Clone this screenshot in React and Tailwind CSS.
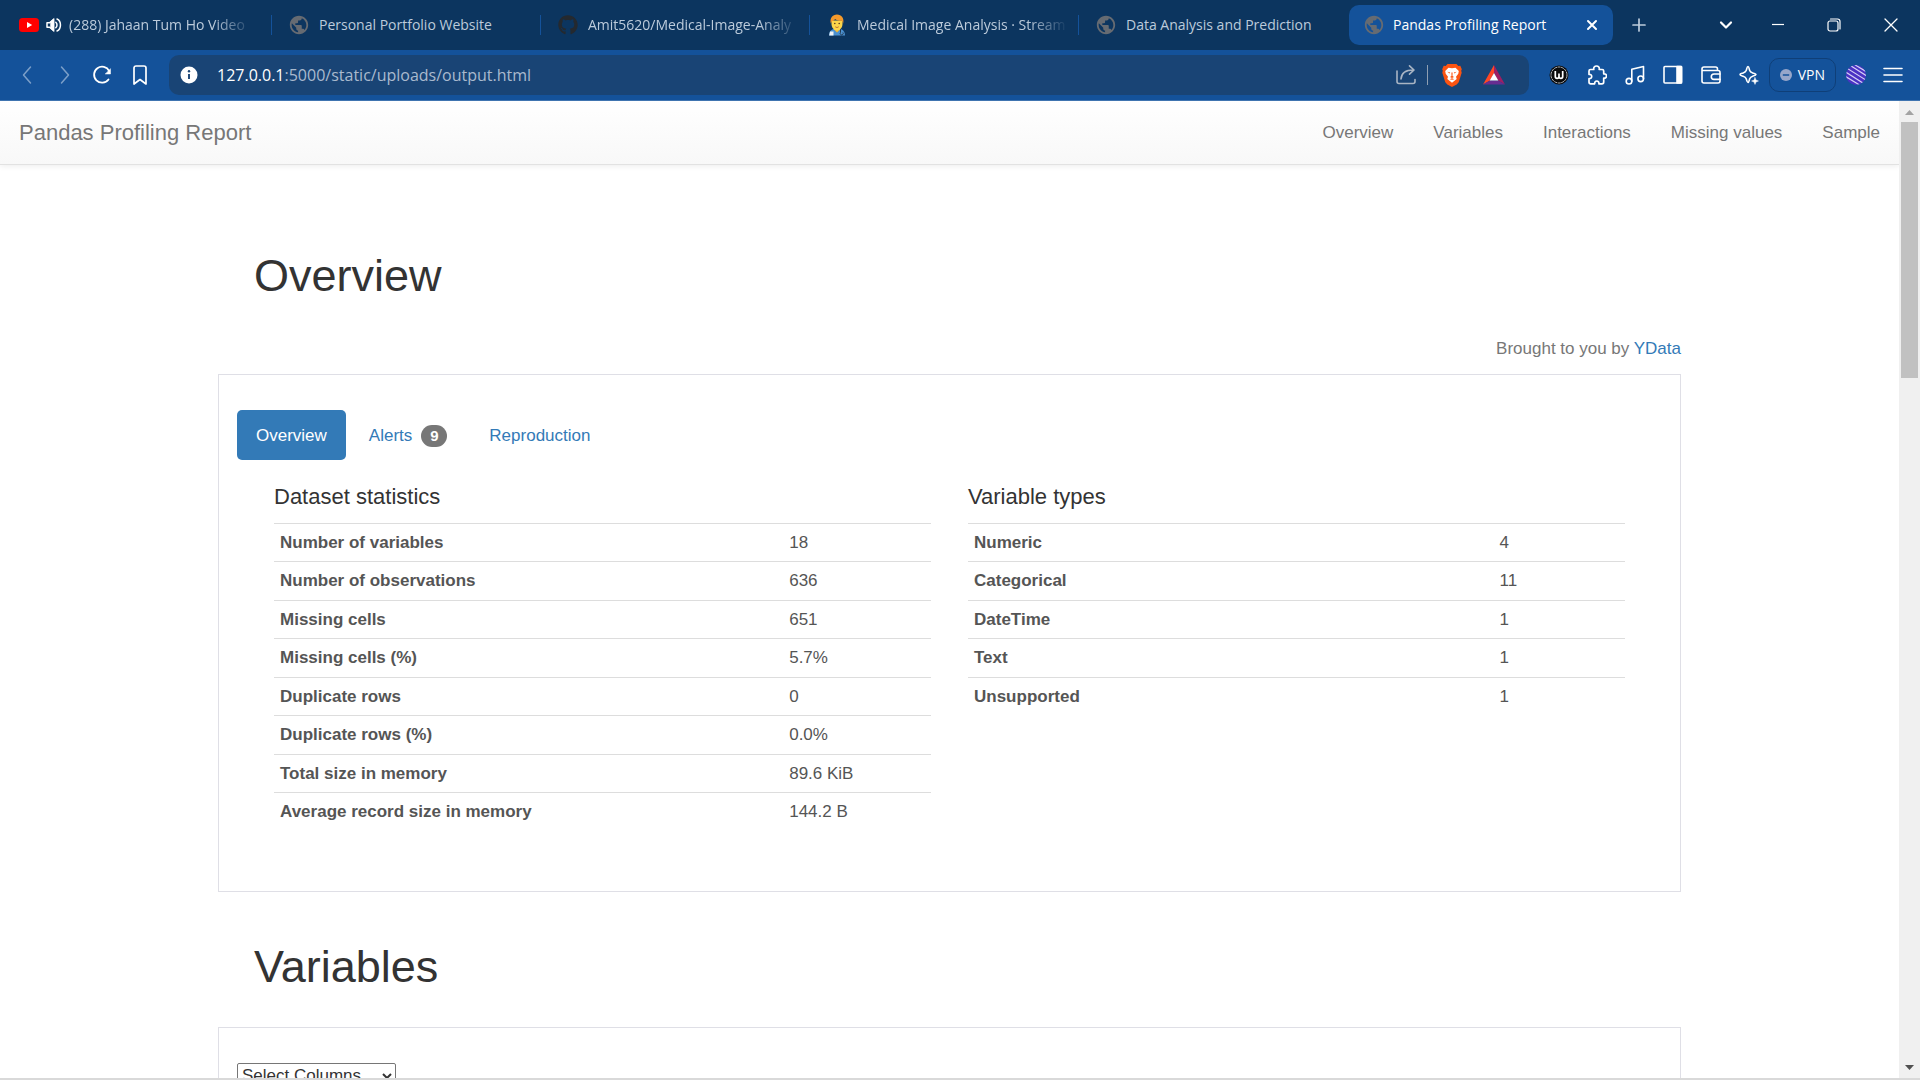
import React from "react";
import { MdPublic } from "react-icons/md";
import { FaGithub } from "react-icons/fa";

const UI_FONT = "font-['Open_Sans','Noto_Sans',sans-serif]";

function YoutubeIcon() {
  return (
    <svg width="20" height="20" viewBox="0 0 20 20" aria-hidden="true">
      <rect x="0" y="3" width="20" height="14" rx="3.5" fill="#f00" />
      <path d="M8 7l5.2 3L8 13z" fill="#fff" />
    </svg>
  );
}

function SpeakerIcon() {
  return (
    <svg width="16" height="16" viewBox="0 0 16 16" fill="none" stroke="#fff" strokeWidth="1.5" className="shrink-0" aria-hidden="true">
      <path d="M1 5.8h2.6L7.5 2.5v11L3.6 10.2H1z" strokeLinejoin="round" />
      <path d="M7.5 2.5v11L5 11V5z" fill="#fff" />
      <path d="M9.8 5.2c1.6 1.500 1.600 4.100 0 5.600M11 2c4.600 2 4.600 10 0 12" strokeLinecap="round" />
    </svg>
  );
}

function DoctorIcon() {
  return (
    <svg width="20" height="22" viewBox="0 0 20 22" aria-hidden="true">
      <path d="M2 21.500c0-4 2.500-6.200 5.200-6.700h5.600c2.700.5 5.200 2.700 5.200 6.700z" fill="#4a90d0" />
      <path d="M7 13h6v2.600l-3 3-3-3z" fill="#f2b632" />
      <path d="M4.500 6.500h11V10c0 3.800-2.600 6.400-5.500 6.400S4.500 13.800 4.500 10z" fill="#fcd54a" />
      <path d="M3.800 9.500C2.600 4 5.500.5 10 .5s7.400 3.500 6.200 9l-1.200-2.700c-3 .3-5.500-.6-7-1.800-.4 1.200-1.600 2-3 2.300z" fill="#f59a2c" />
      <circle cx="7.800" cy="9.500" r=".8" fill="#5b3b1e" />
      <circle cx="12.200" cy="9.500" r=".8" fill="#5b3b1e" />
      <path d="M8.300 12.800c1 .9 2.400.9 3.400 0" stroke="#b5622a" strokeWidth=".9" fill="none" />
      <path d="M3 17.500h3.500v4H2.200z" fill="#eef2f6" />
      <path d="M13.500 15.200v3.300a1.500 1.500 0 1 0 2.400 0" stroke="#26384d" strokeWidth="1" fill="none" />
    </svg>
  );
}

function Glyph({ size = 20, width = 1.5, children }) {
  return (
    <svg
      width={size}
      height={size}
      viewBox={`0 0 ${size} ${size}`}
      fill="none"
      stroke="currentColor"
      strokeWidth={width}
      strokeLinecap="round"
      strokeLinejoin="round"
      aria-hidden="true"
    >
      {children}
    </svg>
  );
}

const globe = <MdPublic size={22} className="shrink-0 text-[#666b72]" aria-hidden="true" />;

const TABS = [
  { title: "(288) Jahaan Tum Ho Video", icon: <YoutubeIcon />, extra: <SpeakerIcon />, fade: true },
  { title: "Personal Portfolio Website", icon: globe },
  { title: "Amit5620/Medical-Image-Analy", icon: <FaGithub size={20} className="text-[#24292f]" aria-hidden="true" />, fade: true },
  { title: "Medical Image Analysis · Stream", icon: <DoctorIcon />, fade: true },
  { title: "Data Analysis and Prediction", icon: globe },
];

function BrowserTab({ title, icon, extra, fade, last }) {
  return (
    <button type="button" className="flex h-10 w-[269px] min-w-0 items-center text-left">
      <span
        className={
          extra
            ? "flex min-w-0 flex-1 items-center gap-[7px] pl-4 pr-[18px]"
            : "flex min-w-0 flex-1 items-center gap-[10px] pl-[17px] pr-[10px]"
        }
      >
        <span className="flex w-5 shrink-0 justify-center">{icon}</span>
        {extra}
        <span
          className={
            fade
              ? "flex-1 whitespace-nowrap [mask-image:linear-gradient(to_right,#000_calc(100%-40px),transparent)]"
              : "flex-1 whitespace-nowrap"
          }
        >
          {title}
        </span>
      </span>
      {!last && <span className="h-5 w-px bg-[#14529a]" />}
    </button>
  );
}

function TabStrip() {
  return (
    <div className="flex h-[50px] shrink-0 items-center bg-[#0c355f] pl-[3px] text-[14px] leading-5 text-[#bccbdb]">
      {TABS.map((tab, i) => (
        <BrowserTab key={tab.title} {...tab} last={i === TABS.length - 1} />
      ))}
      <div className="ml-px flex h-10 w-[264px] items-center gap-2 rounded-[10px] bg-[#14529a] pl-[14px] pr-[14px] text-white">
        {globe}
        <button type="button" className="flex-1 whitespace-nowrap text-left">
          Pandas Profiling Report
        </button>
        <button type="button" aria-label="Close tab">
          <Glyph size={14} width={2}>
            <path d="M3 3l8 8M11 3l-8 8" />
          </Glyph>
        </button>
      </div>
      <button type="button" aria-label="New tab" className="ml-[18px]">
        <Glyph size={16} width={1.7}>
          <path d="M8 2v12M2 8h12" />
        </Glyph>
      </button>
      <div className="ml-auto flex items-center pr-5 text-white">
        <button type="button" aria-label="Search tabs" className="mr-9">
          <Glyph size={16} width={2.2}>
            <path d="M3 5.500l5 5 5-5" />
          </Glyph>
        </button>
        <button type="button" aria-label="Minimize" className="mr-10">
          <Glyph size={16} width={1.2}>
            <path d="M2 7.500h12" strokeLinecap="butt" />
          </Glyph>
        </button>
        <button type="button" aria-label="Restore" className="mr-10">
          <Glyph size={16} width={1.2}>
            <rect x="2" y="4" width="10" height="10" rx="2" />
            <path d="M4.500 2H11.500A2.500 2.500 0 0 1 14 4.500V12" />
          </Glyph>
        </button>
        <button type="button" aria-label="Close window">
          <Glyph size={18} width={1.3}>
            <path d="M3 3l12 12M15 3L3 15" />
          </Glyph>
        </button>
      </div>
    </div>
  );
}

function AddressBar() {
  return (
    <div className="ml-[19px] flex h-10 flex-1 items-center rounded-[10px] bg-[#194475] pl-[10px] pr-6">
      <button type="button" aria-label="Site information">
        <svg width="20" height="20" viewBox="0 0 20 20" aria-hidden="true">
          <circle cx="10" cy="10" r="8.500" fill="#fff" />
          <path d="M10 9v5" stroke="#194475" strokeWidth="1.900" />
          <circle cx="10" cy="6.300" r="1.200" fill="#194475" />
        </svg>
      </button>
      <div className="relative ml-[18px] flex-1 text-[16px] leading-6">
        <input
          type="text"
          aria-label="Address"
          defaultValue="127.0.0.1:5000/static/uploads/output.html"
          className="w-full bg-transparent text-transparent caret-white outline-none"
        />
        <span aria-hidden="true" className="pointer-events-none absolute inset-0 text-[#a9bace]">
          <span className="text-white">127.0.0.1</span>:5000/static/uploads/output.html
        </span>
      </div>
      <button type="button" aria-label="Share" className="text-[#a9b5c4]">
        <Glyph size={22} width={1.6}>
          <path d="M2 7v10.500a2 2 0 0 0 2 2h14a2 2 0 0 0 2-2v-2" />
          <path d="M6 15c.3-5.500 4-9 12.500-9M14.500 1.800L19 6l-4.500 4.200" />
        </Glyph>
      </button>
      <span className="ml-[10px] h-5 w-px bg-[#8f9fb2]" />
      <button type="button" aria-label="Brave Shields" className="ml-[13px]">
        <svg width="22" height="24" viewBox="0 0 22 24" aria-hidden="true">
          <path d="M6.500 1h9l1.800 2 2-.2 1.500 3.500-.6 1.500.5 2-3 9.500-2 2.200L11 24l-4.700-2.500-2-2.200-3-9.500.5-2-.6-1.500L2.700 2.800l2 .2z" fill="#fb5412" />
          <path
            d="M7.500 4.700l3.500.6 3.500-.6 3.300 3.200-.5 2.800-2.300 3.100.7 2.200L11 19.800 6.300 16l.7-2.200-2.300-3.100-.5-2.800z"
            fill="#fff"
          />
          <path
            d="M6.300 8.800l2.900.6-.6 1zM15.700 8.800l-2.900.6.600 1zM10.400 9.500h1.200l-.1 3.500 1.500 1-2 .9-2-.9 1.500-1zM8.700 16.200l2.300-.9 2.300.9-2.300.5z"
            fill="#fb5412"
          />
        </svg>
      </button>
      <button type="button" aria-label="Brave Rewards" className="ml-5">
        <svg width="22" height="20" viewBox="0 0 22 20" aria-hidden="true">
          <path d="M11 0L0 19.500l7-4L11 8z" fill="#ff4724" />
          <path d="M11 0l11 19.500-7-4L11 8z" fill="#9e1f63" />
          <path d="M0 19.500h22l-7-4H7z" fill="#662d91" />
          <path d="M11 8l4.300 7.500H6.700z" fill="#fff" />
        </svg>
      </button>
    </div>
  );
}

function Toolbar() {
  return (
    <div className="flex h-[51px] shrink-0 items-center border-b border-[#3f74b0] bg-[#14529a] pl-[17px] pr-[17px] text-white">
      <button type="button" aria-label="Back" className="text-[#7c9fc8]">
        <Glyph>
          <path d="M13.500 2L6.500 10l7 8" />
        </Glyph>
      </button>
      <button type="button" aria-label="Forward" className="ml-[18px] text-[#7c9fc8]">
        <Glyph>
          <path d="M6.500 2l7 8-7 8" />
        </Glyph>
      </button>
      <button type="button" aria-label="Reload" className="ml-[17px]">
        <Glyph width={1.8}>
          <path d="M16.500 14.500A8 8 0 1 1 17.200 6" />
          <path d="M18.500 4v5h-5z" fill="currentColor" strokeWidth="0.500" />
        </Glyph>
      </button>
      <button type="button" aria-label="Bookmark" className="ml-[18px]">
        <Glyph width={1.7}>
          <path d="M4 3a2 2 0 0 1 2-2h8a2 2 0 0 1 2 2v16l-6-4.500L4 19z" />
        </Glyph>
      </button>
      <AddressBar />
      <div className="ml-5 flex items-center gap-[18px]">
        <button type="button" aria-label="Web extension">
          <svg width="20" height="20" viewBox="0 0 20 20" aria-hidden="true">
            <circle cx="10" cy="10" r="9.500" fill="#0b0b0b" />
            <circle cx="10" cy="10" r="8" fill="none" stroke="#c3cad2" strokeWidth=".9" strokeDasharray="3 .6" />
            <path d="M6.300 6v5.500a1.850 1.850 0 0 0 3.700 0V8.500v3a1.850 1.850 0 0 0 3.700 0V6" fill="none" stroke="#fff" strokeWidth="1.700" />
          </svg>
        </button>
        <button type="button" aria-label="Extensions">
          <Glyph width={1.7}>
            <path d="M3.500 4.500h3.300C6.300 2.600 7.600 1 9.500 1s3.200 1.600 2.700 3.500h3a1.500 1.500 0 0 1 1.500 1.500v2.800c2-.2 2.800 1.100 2.800 2.200s-.8 2.400-2.800 2.200V17a1.800 1.800 0 0 1-1.800 1.800h-3c.2-1.800-.8-2.800-2.100-2.800s-2.300 1-2.100 2.800H3.800A1.800 1.800 0 0 1 2 17v-3.300c1.800.1 2.700-.9 2.700-2.200S3.800 9.300 2 9.500V6a1.500 1.500 0 0 1 1.500-1.500z" />
          </Glyph>
        </button>
        <button type="button" aria-label="Playlist">
          <Glyph width={1.6}>
            <circle cx="4" cy="16.200" r="2.800" />
            <circle cx="15.700" cy="13.800" r="2.800" />
            <path d="M6.800 16.200V4.200l11.700-2.700v12.300" />
          </Glyph>
        </button>
        <button type="button" aria-label="Side panel">
          <Glyph width={1.6}>
            <rect x="1" y="1.500" width="17.500" height="16.500" rx="1" />
            <path d="M14 1.500h4.500V18H14z" fill="currentColor" />
          </Glyph>
        </button>
        <button type="button" aria-label="Wallet">
          <Glyph width={1.6}>
            <path d="M16.500 5.500V4a2 2 0 0 0-2-2H3a2 2 0 0 0-2 2v12a2 2 0 0 0 2 2h14a2 2 0 0 0 2-2V7.500a2 2 0 0 0-2-2H2" />
            <path d="M19 9h-6a2.700 2.700 0 0 0 0 5.400h6" />
          </Glyph>
        </button>
        <button type="button" aria-label="Leo AI">
          <Glyph width={1.6}>
            <path d="M9 1.500c1 0 1 2.200 1.700 4s1.500 1.900 3 2.400 3.300.8 3.300 1.600-1.600 1.200-3.300 1.700-2.400.9-3 2.600S9.900 17.500 9 17.500s-1.200-2-1.800-3.700-1.400-2.100-3-2.600S1 10.500 1 9.500s1.600-1.100 3.200-1.600 2.400-.8 3-2.400S8 1.500 9 1.500z" />
            <path d="M16 12.500l1 2.500 2.500 1-2.500 1-1 2.500-1-2.500-2.500-1 2.500-1z" fill="currentColor" strokeWidth="0.400" />
          </Glyph>
        </button>
      </div>
      <button
        type="button"
        className="ml-[10px] flex h-[34px] items-center gap-[6px] rounded-[10px] border border-[#0f3f78] px-[10px] text-[14px] leading-5"
      >
        <svg width="12" height="12" viewBox="0 0 12 12" aria-hidden="true">
          <circle cx="6" cy="6" r="6" fill="#97a6ca" />
          <path d="M2.800 6h6.400" stroke="#14529a" strokeWidth="1.500" />
        </svg>
        VPN
      </button>
      <button type="button" aria-label="Profile" className="ml-[10px]">
        <svg width="20" height="20" viewBox="0 0 20 20" aria-hidden="true">
          <defs>
            <clipPath id="avatar">
              <circle cx="10" cy="10" r="10" />
            </clipPath>
          </defs>
          <g clipPath="url(#avatar)">
            <rect width="20" height="20" fill="#4b32c3" />
            <path
              d="M6-2l18 11M2-1l22 14M-1 2l24 15M-2 6l22 14M-2 10.500l18 11"
              stroke="#d5cff5"
              strokeWidth="1.200"
            />
          </g>
        </svg>
      </button>
      <button type="button" aria-label="Menu" className="ml-[17px]">
        <Glyph width={1.6}>
          <path d="M1 3.500h18M1 10h18M1 16.500h18" />
        </Glyph>
      </button>
    </div>
  );
}

const NAV = ["Overview", "Variables", "Interactions", "Missing values", "Sample"];

function ReportNav() {
  return (
    <nav className="flex h-16 shrink-0 items-center justify-between border-b border-[#e2e2e2] bg-linear-to-b from-white to-[#f8f8f8] px-[19px] pb-px text-[#777] shadow-[0_1px_6px_rgba(0,0,0,0.08)]">
      <a href="#top" className="text-[22px] leading-[25px]">
        Pandas Profiling Report
      </a>
      <ul className="flex gap-10 text-[17px] leading-[25px]">
        {NAV.map((item) => (
          <li key={item}>
            <a href={`#${item.toLowerCase().replace(" ", "-")}`}>{item}</a>
          </li>
        ))}
      </ul>
    </nav>
  );
}

const DATASET = [
  ["Number of variables", "18"],
  ["Number of observations", "636"],
  ["Missing cells", "651"],
  ["Missing cells (%)", "5.7%"],
  ["Duplicate rows", "0"],
  ["Duplicate rows (%)", "0.0%"],
  ["Total size in memory", "89.6 KiB"],
  ["Average record size in memory", "144.2 B"],
];

const TYPES = [
  ["Numeric", "4"],
  ["Categorical", "11"],
  ["DateTime", "1"],
  ["Text", "1"],
  ["Unsupported", "1"],
];

function StatTable({ title, rows, split }) {
  return (
    <section className="min-w-0">
      <h4 className="mb-[14px] text-[22px] leading-[25px] text-[#333]">{title}</h4>
      <table className="w-full table-fixed border-collapse text-[17px] leading-[25px] text-[#555]">
        <colgroup>
          <col className={split} />
          <col />
        </colgroup>
        <tbody>
          {rows.map(([label, value]) => (
            <tr key={label} className="h-[38px] border-t border-[#ddd] align-top even:h-[39px]">
              <th scope="row" className="px-[6px] pb-0 pt-[6px] text-left font-bold">
                {label}
              </th>
              <td className="px-[6px] pb-0 pt-[6px]">{value}</td>
            </tr>
          ))}
        </tbody>
      </table>
    </section>
  );
}

function Report() {
  return (
    <main className="mx-auto w-full max-w-[1463px] text-[17px] leading-[25px]">
      <h1 id="overview" className="pl-9 pt-[86px] text-[45px] leading-[50px] text-[#333]">
        Overview
      </h1>
      <p className="mt-[35px] text-right text-[#777]">
        Brought to you by{" "}
        <a href="#ydata" className="text-[#337ab7]">
          YData
        </a>
      </p>
      <div className="mt-[13px] border border-[#dfdfe6] px-[18px] pb-[59px] pt-[35px]">
        <div role="tablist" className="flex gap-1 text-[#337ab7]">
          <button type="button" role="tab" aria-selected="true" className="h-[50px] rounded-[5px] bg-[#337ab7] px-[19px] text-white">
            Overview
          </button>
          <button type="button" role="tab" aria-selected="false" className="flex h-[50px] items-center gap-[9px] px-[19px]">
            Alerts
            <span className="mt-[2px] flex h-[22px] w-[26px] items-center justify-center rounded-full bg-[#777] text-[15px] font-bold leading-[22px] text-white">
              9
            </span>
          </button>
          <button type="button" role="tab" aria-selected="false" className="h-[50px] px-[19px]">
            Reproduction
          </button>
        </div>
        <div className="mt-6 grid grid-cols-2 gap-[37px] px-[37px]">
          <StatTable title="Dataset statistics" rows={DATASET} split="w-[77.5%]" />
          <StatTable title="Variable types" rows={TYPES} split="w-[80%]" />
        </div>
      </div>
      <h1 id="variables" className="pl-9 pt-[50px] text-[45px] leading-[50px] text-[#333]">
        Variables
      </h1>
      <div className="mt-[35px] h-[200px] border border-[#dfdfe6] px-[18px] pt-[35px]">
        <select
          aria-label="Select Columns"
          className="h-[26px] w-[159px] rounded-[2px] border border-[#767676] bg-white text-[17px] text-[#333]"
        >
          <option>Select Columns</option>
        </select>
      </div>
    </main>
  );
}

function Scrollbar() {
  return (
    <div aria-hidden="true" className="flex w-[21px] shrink-0 flex-col items-center bg-[#f0f0f0]">
      <svg width="21" height="21" viewBox="0 0 21 21" className="shrink-0">
        <path d="M6 14h9l-4.500-5z" fill="#a3a3a3" />
      </svg>
      <div className="h-[256px] w-[17px] shrink-0 bg-[#c1c1c1]" />
      <svg width="21" height="21" viewBox="0 0 21 21" className="mt-auto shrink-0">
        <path d="M6 8h9l-4.500 5z" fill="#505050" />
      </svg>
    </div>
  );
}

export default function App() {
  return (
    <div className="flex h-screen flex-col overflow-hidden bg-white">
      <header className={UI_FONT}>
        <TabStrip />
        <Toolbar />
      </header>
      <div className="flex min-h-0 flex-1 border-b-2 border-[#d9d9d9] font-['Liberation_Sans',Arial,sans-serif]">
        <div className="flex min-w-0 flex-1 flex-col overflow-hidden">
          <ReportNav />
          <div className="min-h-0 flex-1 overflow-hidden">
            <Report />
          </div>
        </div>
        <Scrollbar />
      </div>
    </div>
  );
}
